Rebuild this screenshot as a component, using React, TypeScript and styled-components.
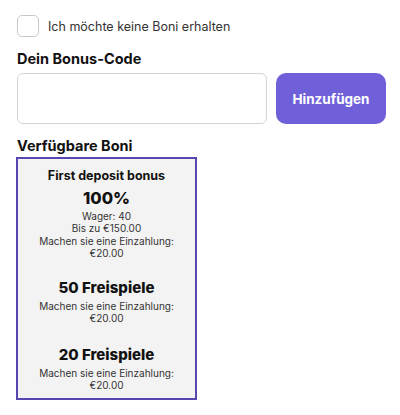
import React from "react";
import styled, { createGlobalStyle } from "styled-components";

const Global = createGlobalStyle`
  html, body { margin: 0; padding: 0; background: #fff; }
  body { font-family: Inter, "Open Sans", "Liberation Sans", sans-serif; color: #111; }
  * { box-sizing: border-box; }
`;

const Page = styled.div`
  width: 400px;
  padding: 15px 14px 0 16px;
  display: flex;
  flex-direction: column;
`;

const CheckRow = styled.label`
  display: flex;
  align-items: center;
  gap: 9px;
  height: 22px;
  padding-left: 1px;
`;

const CheckBox = styled.span`
  width: 22px;
  height: 22px;
  border: 1px solid #c8c8c8;
  border-radius: 5px;
  background: #fff;
`;

const CheckLabel = styled.span`
  font-size: 12.5px;
  color: #333;
`;

const Heading = styled.h3<{ $top: number }>`
  margin: ${(p) => p.$top}px 0 0 1px;
  font-size: 14.5px;
  line-height: 18px;
  font-weight: 700;
  color: #111;
`;

const CodeRow = styled.div`
  display: flex;
  gap: 9px;
  margin-top: 5px;
  padding-left: 1px;
`;

const CodeInput = styled.input`
  width: 250px;
  height: 51px;
  border: 1.5px solid #d4d4d4;
  border-radius: 6px;
  outline: none;
  font: inherit;
`;

const AddButton = styled.button`
  width: 110px;
  height: 51px;
  border: none;
  border-radius: 10px;
  background: #6f60d9;
  color: #fff;
  font-family: inherit;
  font-size: 13.5px;
  font-weight: 700;
`;

const Card = styled.div`
  margin-top: 2px;
  width: 181px;
  height: 243px;
  border: 2px solid #5847b0;
  background: #f3f3f3;
  display: flex;
  flex-direction: column;
  align-items: center;
  padding-top: 8px;
  text-align: center;
`;

const CardTitle = styled.div`
  font-size: 12.5px;
  font-weight: 700;
  line-height: 17px;
  color: #111;
`;

const Offer = styled.div<{ $top: number }>`
  margin-top: ${(p) => p.$top}px;
  display: flex;
  flex-direction: column;
  align-items: center;
`;

const OfferValue = styled.div<{ $size: number }>`
  font-size: ${(p) => p.$size}px;
  font-weight: 800;
  line-height: 20px;
  color: #111;
  margin-bottom: 2px;
`;

const Detail = styled.div`
  font-size: 10px;
  line-height: 12.3px;
  color: #333;
`;

export default function App() {
  return (
    <>
      <Global />
      <Page>
        <CheckRow>
          <CheckBox />
          <CheckLabel>Ich möchte keine Boni erhalten</CheckLabel>
        </CheckRow>
        <Heading $top={13}>Dein Bonus-Code</Heading>
        <CodeRow>
          <CodeInput />
          <AddButton>Hinzufügen</AddButton>
        </CodeRow>
        <Heading $top={13}>Verfügbare Boni</Heading>
        <Card>
          <CardTitle>First deposit bonus</CardTitle>
          <Offer $top={4}>
            <OfferValue $size={16.5}>100%</OfferValue>
            <Detail>Wager: 40</Detail>
            <Detail>Bis zu €150.00</Detail>
            <Detail>Machen sie eine Einzahlung:</Detail>
            <Detail>€20.00</Detail>
          </Offer>
          <Offer $top={19}>
            <OfferValue $size={15}>50 Freispiele</OfferValue>
            <Detail>Machen sie eine Einzahlung:</Detail>
            <Detail>€20.00</Detail>
          </Offer>
          <Offer $top={20}>
            <OfferValue $size={15}>20 Freispiele</OfferValue>
            <Detail>Machen sie eine Einzahlung:</Detail>
            <Detail>€20.00</Detail>
          </Offer>
        </Card>
      </Page>
    </>
  );
}
